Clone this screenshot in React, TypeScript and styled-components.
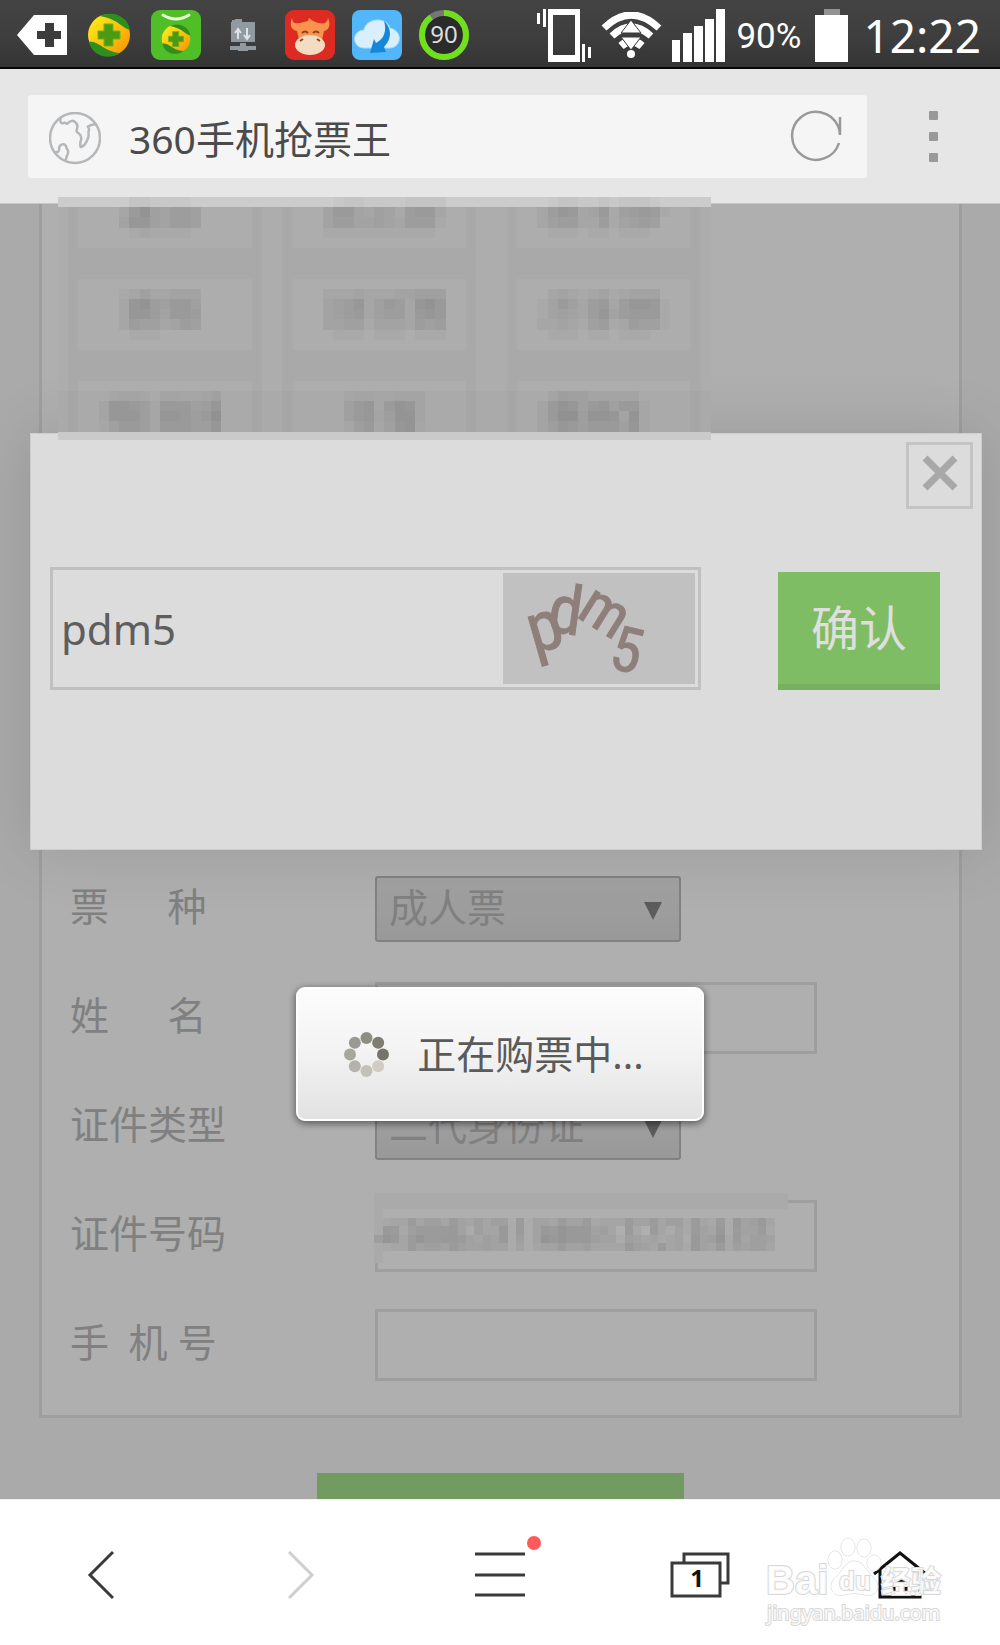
import React from "react";
import styled, { createGlobalStyle, css } from "styled-components";

const GlobalStyle = createGlobalStyle`
  * { box-sizing: border-box; }
  body {
    margin: 0;
    background: #ffffff;
    font-family: "Noto Sans", "Noto Sans CJK SC", sans-serif;
  }
  button, input, select { font: inherit; color: inherit; margin: 0; }
  button { padding: 0; border: 0; background: none; cursor: pointer; }
  svg { display: block; flex: none; }
`;

const Screen = styled.div`
  display: flex;
  flex-direction: column;
  min-height: 100vh;
`;

/* ---------- status bar ---------- */

const StatusBar = styled.header`
  display: flex;
  justify-content: space-between;
  align-items: center;
  height: 69px;
  padding: 3px 19px 0 17px;
  border-bottom: 2px solid #050505;
  background: linear-gradient(#434343, #3f3f3f 50%, #343434);
  color: #ffffff;
`;

const Tray = styled.div<{ $gap: number }>`
  display: flex;
  align-items: center;
  gap: ${(p) => p.$gap}px;
`;

const BatteryLevel = styled.span`
  padding: 3px 4px 0 1px;
  font-family: Roboto, sans-serif;
  font-size: 35px;
  line-height: 40px;
`;

const Clock = styled.time`
  padding-left: 5px;
  font-size: 46px;
  line-height: 60px;
`;

/* ---------- address bar ---------- */

const AddressBar = styled.div`
  display: flex;
  align-items: center;
  gap: 36px;
  height: 135px;
  padding: 0 36px 0 28px;
  border-bottom: 1px solid #c9c9c9;
  background: #e6e6e6;
`;

const AddressBox = styled.div`
  display: flex;
  flex: 1;
  align-items: center;
  gap: 28px;
  height: 83px;
  padding: 0 25px 0 21px;
  border-radius: 3px;
  background: #f5f5f5;
`;

const AddressLabel = styled.label`
  display: flex;
  flex: 1;
  align-items: center;
  gap: 28px;
  min-width: 0;
  padding-top: 5px;
`;

const AddressInput = styled.input`
  flex: 1;
  min-width: 0;
  padding: 0;
  border: 0;
  outline: 0;
  background: none;
  color: #4b4b4b;
  font-size: 39px;
  line-height: 56px;
`;

const MenuButton = styled.button`
  display: flex;
  flex-direction: column;
  align-items: center;
  gap: 12px;
  width: 61px;
`;

const MenuDot = styled.span`
  width: 9px;
  height: 9px;
  border-radius: 1px;
  background: #999999;
`;

/* ---------- page ---------- */

const Main = styled.main`
  position: relative;
  flex: 1;
`;

const Page = styled.div`
  display: flex;
  flex-direction: column;
  align-items: center;
  height: 100%;
  padding: 0 38px 0 39px;
  overflow: hidden;
  background: #aaaaaa;
`;

const Panel = styled.form`
  width: 100%;
  padding: 0 28px 16px;
  border: 3px solid #9e9e9e;
  border-top: 0;
  background: #afafaf;
`;

const PassengerArea = styled.div`
  height: 650px;
`;

const Row = styled.div`
  display: grid;
  grid-template-columns: 305px 1fr;
  align-items: center;
  height: 109px;
  color: #808080;
  font-size: 39px;
`;

const Label = styled.label`
  padding-bottom: 5px;
  line-height: 56px;
  white-space: pre;
`;

const SelectWrap = styled.div`
  position: relative;
  width: 306px;
`;

const Select = styled.select`
  width: 100%;
  height: 66px;
  padding: 0 12px 4px;
  border: 2px solid #828282;
  border-radius: 3px;
  appearance: none;
  background: linear-gradient(#a2a2a2, #999999);
`;

const SelectArrow = styled.svg`
  position: absolute;
  top: 26px;
  right: 19px;
  pointer-events: none;
`;

const fieldBorder = css`
  border: 3px solid #9e9e9e;
  border-radius: 0;
  outline: 0;
  background: transparent;
`;

const Field = styled.input`
  ${fieldBorder}
  width: 442px;
  height: 72px;
  padding: 0 10px;
`;

const FieldWrap = styled.div`
  position: relative;
  display: flex;
`;

const SubmitButton = styled.button`
  flex: none;
  width: 367px;
  height: 26px;
  margin-top: 55px;
  background: #719b61;
`;

/* ---------- layers over the page ---------- */

const PassengerMosaic = styled.svg`
  position: absolute;
  top: -7px;
  left: 58px;
`;

const NumberMosaic = styled.svg`
  position: absolute;
  top: -7px;
  left: -9px;
`;

const Dialog = styled.section`
  position: absolute;
  top: 229px;
  left: 30px;
  right: 18px;
  display: flex;
  flex-direction: column;
  padding: 8px 8px 159px 19px;
  border: 1px solid #cdcdcd;
  background: #dcdcdc;
  box-shadow: 0 0 60px rgba(0, 0, 0, 0.12);
`;

const CloseButton = styled.button`
  display: grid;
  place-items: center;
  align-self: flex-end;
  width: 67px;
  height: 67px;
  padding-bottom: 5px;
  border: 3px solid #c4c4c4;
`;

const CodeForm = styled.form`
  display: flex;
  align-items: flex-end;
  gap: 77px;
  margin-top: 58px;
  padding-right: 33px;
`;

const CodeBox = styled.div`
  display: flex;
  flex: 1;
  align-items: center;
  min-width: 0;
  height: 123px;
  padding: 3px;
  border: 3px solid #c0c0c0;
`;

const CodeInput = styled.input`
  flex: 1;
  min-width: 0;
  height: 100%;
  padding: 0 0 0 5px;
  border: 0;
  outline: 0;
  background: none;
  color: #5e5e5e;
  font-size: 42px;
`;

const ConfirmButton = styled.button`
  flex: none;
  width: 162px;
  height: 118px;
  border-bottom: 6px solid #77b160;
  background: #7fbd65;
  color: #dfdfdf;
  font-size: 48px;
  line-height: 60px;
`;

const ToastLayer = styled.div`
  position: absolute;
  top: 783px;
  left: 0;
  right: 0;
  display: flex;
  justify-content: center;
`;

const Toast = styled.div`
  display: flex;
  align-items: center;
  gap: 28px;
  height: 134px;
  padding: 0 58px 0 46px;
  border: 2px solid #ffffff;
  border-radius: 9px;
  background: linear-gradient(#fcfcfc, #f4f4f4 45%, #e2e2e2);
  box-shadow: 0 2px 7px 1px rgba(0, 0, 0, 0.45);
  color: #5a5a5a;
  font-size: 39px;
  line-height: 56px;
`;

/* ---------- bottom navigation ---------- */

const NavBar = styled.nav`
  position: relative;
  display: grid;
  grid-template-columns: repeat(5, 1fr);
  height: 147px;
  border-top: 1px solid #f0f0f0;
  background: #ffffff;
`;

const NavButton = styled.button`
  position: relative;
  display: grid;
  place-items: center;
  padding-top: 4px;
`;

const TabCount = styled.span`
  position: absolute;
  top: 63px;
  left: 86px;
  width: 22px;
  color: #111111;
  font-size: 24px;
  font-weight: 700;
  line-height: 30px;
  text-align: center;
`;

const Watermark = styled.svg`
  position: absolute;
  top: 32px;
  right: 50px;
  pointer-events: none;
`;

/* ---------- mosaics ---------- */

type Patch = { col: number; row: number; lines: string[] };

const passengerPatches: Patch[] = [
  { col: 6, row: 0, lines: ["02211110", "26843554", "37743554", "01211110"] },
  { col: 26, row: 0, lines: ["012211112222", "366324315662", "355334325551", "111111111110"] },
  { col: 47, row: 0, lines: ["0122112122210", "2576236145651", "2455225134540", "0111011011100"] },
  { col: 6, row: 9, lines: ["12422333", "27854664", "27753665", "25442354", "01110000"] },
  { col: 26, row: 9, lines: ["222322233444", "345724652786", "345624552676", "334413332545", "011101110111"] },
  { col: 47, row: 9, lines: ["0232123123330", "1364256257761", "1343257356661", "2232145125441", "0111011011100"] },
  { col: 4, row: 19, lines: ["012210221123", "266541555346", "266641665458", "135541555446", "155540333225"] },
  { col: 28, row: 19, lines: ["12211222", "35615762", "35624772", "14513671"] },
  { col: 47, row: 19, lines: ["02433222220", "25763563551", "25884776271", "24654555361", "13553444241"] },
];

const numberPatches: Patch[] = [
  {
    col: 1,
    row: 3,
    lines: [
      "023363553643535516144364462333644635526326174573",
      "076256666741533716147687774530620631426437164462",
      "487368667764354715148787775441543423417458263554",
      "023364554654454414134464453333754363427436254553",
    ],
  },
];

function Cells({ patches, size }: { patches: Patch[]; size: number }) {
  return (
    <g shapeRendering="crispEdges">
      {patches.flatMap((patch, p) =>
        patch.lines.flatMap((line, r) =>
          [...line].map((shade, c) => (
            <rect
              key={`${p}-${r}-${c}`}
              x={(patch.col + c) * size}
              y={(patch.row + r) * size}
              width={size}
              height={size}
              fillOpacity={Number(shade) * 0.018}
            />
          ))
        )
      )}
    </g>
  );
}

const CELL = 10.2;

function PassengerNames() {
  return (
    <PassengerMosaic width="653" height="243" aria-hidden="true">
      <rect width="653" height="243" fill="#adadad" />
      <g shapeRendering="crispEdges" fill="#a9a9a9">
        {[1, 22, 44].map((col) => (
          <React.Fragment key={col}>
            <rect x={col * CELL} y="10" width={CELL * 19} height="233" />
            {[0, 8, 18].map((row) => (
              <rect
                key={row}
                x={(col + 1) * CELL}
                y={row * CELL}
                width={CELL * 17}
                height={row === 0 ? CELL * 5 : CELL * 7}
                fill="#adadad"
              />
            ))}
          </React.Fragment>
        ))}
      </g>
      <rect y="194" width="653" height="49" fillOpacity="0.015" />
      <rect width="653" height="10" fill="#cccccc" />
      <Cells patches={passengerPatches} size={CELL} />
      <rect y="235" width="653" height="8" fill="#cacaca" />
    </PassengerMosaic>
  );
}

/* ---------- status icons ---------- */

const BackPlus = () => (
  <svg width="50" height="40" viewBox="0 0 50 40">
    <path d="M0 20 17 0H50V40H17Z" fill="#fff" />
    <path d="M28 8h9v8h7v8h-7v8h-9v-8h-8v-8h8Z" fill="#3c3c3c" />
  </svg>
);

const Ball = ({ id }: { id: string }) => (
  <>
    <defs>
      <linearGradient id={id} x1="0" y1="0" x2="1" y2="1">
        <stop offset="0" stopColor="#fff51a" />
        <stop offset="1" stopColor="#f78f04" />
      </linearGradient>
    </defs>
    <circle cx="25" cy="25" r="21" fill={`url(#${id})`} />
    <path d="M16 6C28 0 44 6 46 20 38 18 34 9 16 6Z" fill="#2d8f1e" />
    <path d="M5 32C14 30 20 42 36 43 24 51 8 46 5 32Z" fill="#2d8f1e" />
    <path d="M20 14h9v7h7v8h-7v7h-9v-7h-6v-8h6Z" fill="#4b9a12" stroke="#6db31c" />
  </>
);

const Guard = () => (
  <svg width="50" height="50" viewBox="0 0 50 50"><Ball id="ballA" /></svg>
);

const Assistant = () => (
  <svg width="50" height="50" viewBox="0 0 50 50">
    <rect width="50" height="50" rx="9" fill="#4fbe27" />
    <path d="M12 5q13 8 26 0" fill="none" stroke="#e9ffd9" strokeWidth="3" strokeLinecap="round" />
    <g transform="translate(8 12) scale(.68)"><Ball id="ballB" /></g>
  </svg>
);

const Transfer = () => (
  <svg width="50" height="50" viewBox="0 0 50 50" fill="#9199a1">
    <path d="M14 12V10h3V9h7v3h13v20H13V12Z" />
    <path d="M22 33h6v3h10v4H30v1H20v-1H12v-4h10Z" />
    <path d="M20 29V19m-3 4 3-4 3 4M29 18v11m-3-4 3 4 3-4" fill="none" stroke="#e0e3e6" strokeWidth="2" />
  </svg>
);

const Ox = () => (
  <svg width="50" height="50" viewBox="0 0 50 50">
    <rect width="50" height="50" rx="9" fill="#dd2b22" />
    <path d="M7 8c-3 8 0 12 5 13l2 9h23l2-9c5-1 7-6 4-13-1 6-5 6-10 5l-5-2-4-3-1 3-8 2C9 14 8 13 7 8Z" fill="#f9944f" />
    <ellipse cx="25" cy="35" rx="15" ry="10" fill="#f4dcc2" />
    <path d="M17 23q3-3 6 0M28 23q3-3 6 0M15 31l3-2M35 31l-3-2" fill="none" stroke="#8c4322" strokeWidth="2" />
  </svg>
);

const Cloud = () => (
  <svg width="50" height="50" viewBox="0 0 50 50">
    <rect width="50" height="50" rx="8" fill="#52b6fb" />
    <path d="M11 38a9 9 0 0 1 1-18c2-12 22-14 26-2 13 3 12 19 0 20Z" fill="#d9f0fc" stroke="#a8dcf8" />
    <path d="M32 11c8 7 8 18 0 26l2 5-16 1 4-14 2 4c8-4 11-12 8-22Z" fill="#1587db" />
  </svg>
);

const Ring = () => (
  <svg width="50" height="50" viewBox="0 0 50 50">
    <circle cx="25" cy="25" r="22" fill="#2b2b2b" stroke="#777" strokeWidth="6" />
    <circle cx="25" cy="25" r="22" fill="none" stroke="#70e01c" strokeWidth="6" pathLength="100" strokeDasharray="90 10" transform="rotate(-90 25 25)" />
    <text x="25" y="33" textAnchor="middle" fontSize="24" fill="#dedede" fontFamily="Noto Sans">90</text>
  </svg>
);

const Vibrate = () => (
  <svg width="54" height="53" viewBox="0 0 54 53" fill="#fff">
    <path d="M11 0h32v53H11ZM16 6v40h22V6Z" fillRule="evenodd" />
    <path d="M0 4h3v11H0ZM6 0h3v18H6ZM45 35h3v18h-3ZM51 38h3v11h-3Z" />
  </svg>
);

const Wifi = () => (
  <svg width="61" height="46" viewBox="0 0 61 46" fill="none" stroke="#fff">
    <path d="M3 16Q30-10 58 16" strokeWidth="7" />
    <path d="M11 24q19-18 39 0" strokeWidth="7" />
    <path d="M20 34q10-9 21 0" strokeWidth="8" />
    <path d="m30 8 10 13H20ZM20 25h20L30 38Z" fill="#fff" stroke="#3b3b3b" strokeWidth="1" />
    <circle cx="30" cy="42" r="4" fill="#fff" stroke="none" />
  </svg>
);

const Signal = () => (
  <svg width="53" height="53" viewBox="0 0 53 53" fill="#fff">
    <path d="M0 31h8v22H0ZM11 24h9v29h-9ZM22 17h9v36h-9ZM33 10h9v43h-9ZM44 0h9v53h-9Z" />
  </svg>
);

const Battery = () => (
  <svg width="33" height="53" viewBox="0 0 33 53">
    <path d="M9 0h16v6H9Z" fill="#929292" />
    <path d="M0 6h33v47H0Z" fill="#fff" />
  </svg>
);

/* ---------- app icons ---------- */

const Globe = () => (
  <svg width="52" height="53" viewBox="0 0 52 53" fill="none" stroke="#b5b8ba" strokeWidth="2.500" strokeLinejoin="round">
    <circle cx="26" cy="26" r="25" />
    <path d="M12 6c-2 3 0 6 3 5 2-1 2 2 4 0 3-3 6-3 8 0 4 4-1 6 1 9 3 2 5 5 4 8s-1 7 0 7c4-1 6-6 7-9 2-3-1-5 1-8 1-2-3-3 0-4 3-2 6-1 8-2" />
    <path d="M5 40c4 1 6-1 5-4 1-4 5-5 7-2 0 4 3 3 2 7s-3 5-2 9" />
  </svg>
);

const Refresh = () => (
  <svg width="52" height="52" viewBox="0 0 52 52" fill="none" stroke="#999" strokeWidth="2.500">
    <path d="M49 33A24 24 0 1 1 48 16Q50 20 50 25V7" />
  </svg>
);

const spokes = ["#8f8e83", "#7f7d71", "#75736a", "#cfcdc3", "#c2c0b8", "#b4b3ab", "#a8a79c", "#9b9a90"];

const Spinner = () => (
  <svg width="45" height="45" viewBox="0 0 45 45">
    {spokes.map((color, i) => {
      const angle = (i * Math.PI) / 4;
      return <circle key={color} cx={22.5 + 16.5 * Math.sin(angle)} cy={22.5 - 16.5 * Math.cos(angle)} r="6" fill={color} />;
    })}
  </svg>
);

const CaptchaPicture = () => (
  <svg width="192" height="111" viewBox="0 0 192 111" role="img" aria-label="验证码">
    <rect width="192" height="111" fill="#c1c1c1" />
    <g fill="#8f7f7b" stroke="#8f7f7b" strokeWidth="1" fontFamily='"Liberation Sans Narrow", "Roboto Condensed", Roboto' fontWeight="400">
      <text transform="translate(31 81) rotate(-16)" fontSize="70">p</text>
      <text transform="translate(43 58) rotate(8)" fontSize="68">d</text>
      <text transform="translate(72 43) rotate(32)" fontSize="62">m</text>
      <text transform="translate(104 94) rotate(14)" fontSize="62">5</text>
    </g>
  </svg>
);

const lineIcon = { fill: "none", stroke: "#3a3a3a", strokeWidth: 3 };

export default function App() {
  return (
    <Screen>
      <GlobalStyle />
      <StatusBar>
        <Tray $gap={17}>
          <BackPlus />
          <Guard />
          <Assistant />
          <Transfer />
          <Ox />
          <Cloud />
          <Ring />
        </Tray>
        <Tray $gap={10}>
          <Vibrate />
          <Wifi />
          <Signal />
          <BatteryLevel>90%</BatteryLevel>
          <Battery />
          <Clock>12:22</Clock>
        </Tray>
      </StatusBar>

      <AddressBar>
        <AddressBox>
          <AddressLabel>
            <Globe />
            <AddressInput aria-label="地址" defaultValue="360手机抢票王" />
          </AddressLabel>
          <button type="button" aria-label="刷新"><Refresh /></button>
        </AddressBox>
        <MenuButton type="button" aria-label="更多">
          <MenuDot />
          <MenuDot />
          <MenuDot />
        </MenuButton>
      </AddressBar>

      <Main>
        <Page>
          <Panel>
            <PassengerArea />
            <Row>
              <Label htmlFor="ticket">{"票\u2002\u2002\u2002种"}</Label>
              <SelectWrap>
                <Select id="ticket"><option>成人票</option></Select>
                <SelectArrow width="18" height="18" viewBox="0 0 18 18"><path d="M0 0h18L9 18Z" fill="#5c5c5c" /></SelectArrow>
              </SelectWrap>
            </Row>
            <Row>
              <Label htmlFor="name">{"姓\u2002\u2002\u2002名"}</Label>
              <Field id="name" />
            </Row>
            <Row>
              <Label htmlFor="idType">证件类型</Label>
              <SelectWrap>
                <Select id="idType"><option>二代身份证</option></Select>
                <SelectArrow width="18" height="18" viewBox="0 0 18 18"><path d="M0 0h18L9 18Z" fill="#5c5c5c" /></SelectArrow>
              </SelectWrap>
            </Row>
            <Row>
              <Label htmlFor="idNumber">证件号码</Label>
              <FieldWrap>
                <Field id="idNumber" />
                <NumberMosaic width="422" height="70" aria-hidden="true">
                  <rect width="422" height="70" fill="#afafaf" />
                  <rect x="8" width="414" height="16" fill="#aaaaaa" />
                  <rect x="8" y="16" width="9" height="54" fill="#aaaaaa" />
                  <Cells patches={numberPatches} size={8.34} />
                </NumberMosaic>
              </FieldWrap>
            </Row>
            <Row>
              <Label htmlFor="phone">{"手\u2002机 号"}</Label>
              <Field id="phone" type="tel" />
            </Row>
          </Panel>
          <SubmitButton type="button" aria-label="提交" />
        </Page>

        <Dialog role="dialog" aria-label="验证码">
          <CloseButton type="button" aria-label="关闭">
            <svg width="36" height="36" viewBox="0 0 36 36" stroke="#a8a8a8" strokeWidth="7">
              <path d="m3 3 30 30M33 3 3 33" />
            </svg>
          </CloseButton>
          <CodeForm>
            <CodeBox>
              <CodeInput aria-label="验证码" defaultValue="pdm5" />
              <CaptchaPicture />
            </CodeBox>
            <ConfirmButton type="button">确认</ConfirmButton>
          </CodeForm>
        </Dialog>

        <PassengerNames />

        <ToastLayer>
          <Toast role="status">
            <Spinner />
            <span>正在购票中...</span>
          </Toast>
        </ToastLayer>
      </Main>

      <NavBar>
        <NavButton type="button" aria-label="后退">
          <svg width="28" height="50" viewBox="0 0 28 50" {...lineIcon}><path d="M27 2 4 25l23 23" /></svg>
        </NavButton>
        <NavButton type="button" aria-label="前进">
          <svg width="30" height="50" viewBox="0 0 30 50" {...lineIcon} stroke="#cfcfcf"><path d="m4 2 23 23L4 48" /></svg>
        </NavButton>
        <NavButton type="button" aria-label="菜单">
          <svg width="84" height="84" viewBox="0 0 84 84" {...lineIcon}>
            <path d="M17 21h50M17 42h50M17 62h50" />
            <circle cx="76" cy="10" r="7" fill="#ff5a5a" stroke="none" />
          </svg>
        </NavButton>
        <NavButton type="button" aria-label="窗口">
          <svg width="60" height="46" viewBox="0 0 60 46" {...lineIcon}>
            <path d="M14 10V2h44v29h-8" />
            <path d="M2 11h48v33H2Z" />
          </svg>
          <TabCount>1</TabCount>
        </NavButton>
        <NavButton type="button" aria-label="主页">
          <svg width="56" height="48" viewBox="0 0 56 48" {...lineIcon} stroke="#111">
            <path d="M2 23 28 2l26 21M8 18v28h40V18M22 46V30h12v16" />
          </svg>
        </NavButton>
        <Watermark width="190" height="104" viewBox="0 0 190 104" aria-hidden="true">
          <g fill="#fff" fillOpacity=".85" stroke="#d8d8d8" strokeWidth="2" style={{ paintOrder: "stroke" }}>
            <text x="6" y="62" fontSize="40" fontWeight="700" fontFamily="Liberation Sans">Bai</text>
            <g fillOpacity=".7" strokeWidth="1">
              <ellipse cx="75" cy="28" rx="7" ry="9" />
              <ellipse cx="88" cy="15" rx="7" ry="9" />
              <ellipse cx="104" cy="16" rx="7" ry="9" />
              <ellipse cx="114" cy="31" rx="7" ry="8" />
              <path d="M94 29c9 0 12 9 18 15 11 9 5 22-7 19-8-2-15-2-21 0-13 3-17-11-8-18 7-6 9-16 18-16Z" />
            </g>
            <text x="79" y="58" fontSize="26" fontWeight="700" fontFamily="Liberation Sans">du</text>
            <text x="121" y="60" fontSize="30" fontWeight="700" fontFamily="Noto Sans CJK SC">经验</text>
            <text x="7" y="88" fontSize="20" fontFamily="Noto Sans">jingyan.baidu.com</text>
          </g>
        </Watermark>
      </NavBar>
    </Screen>
  );
}
